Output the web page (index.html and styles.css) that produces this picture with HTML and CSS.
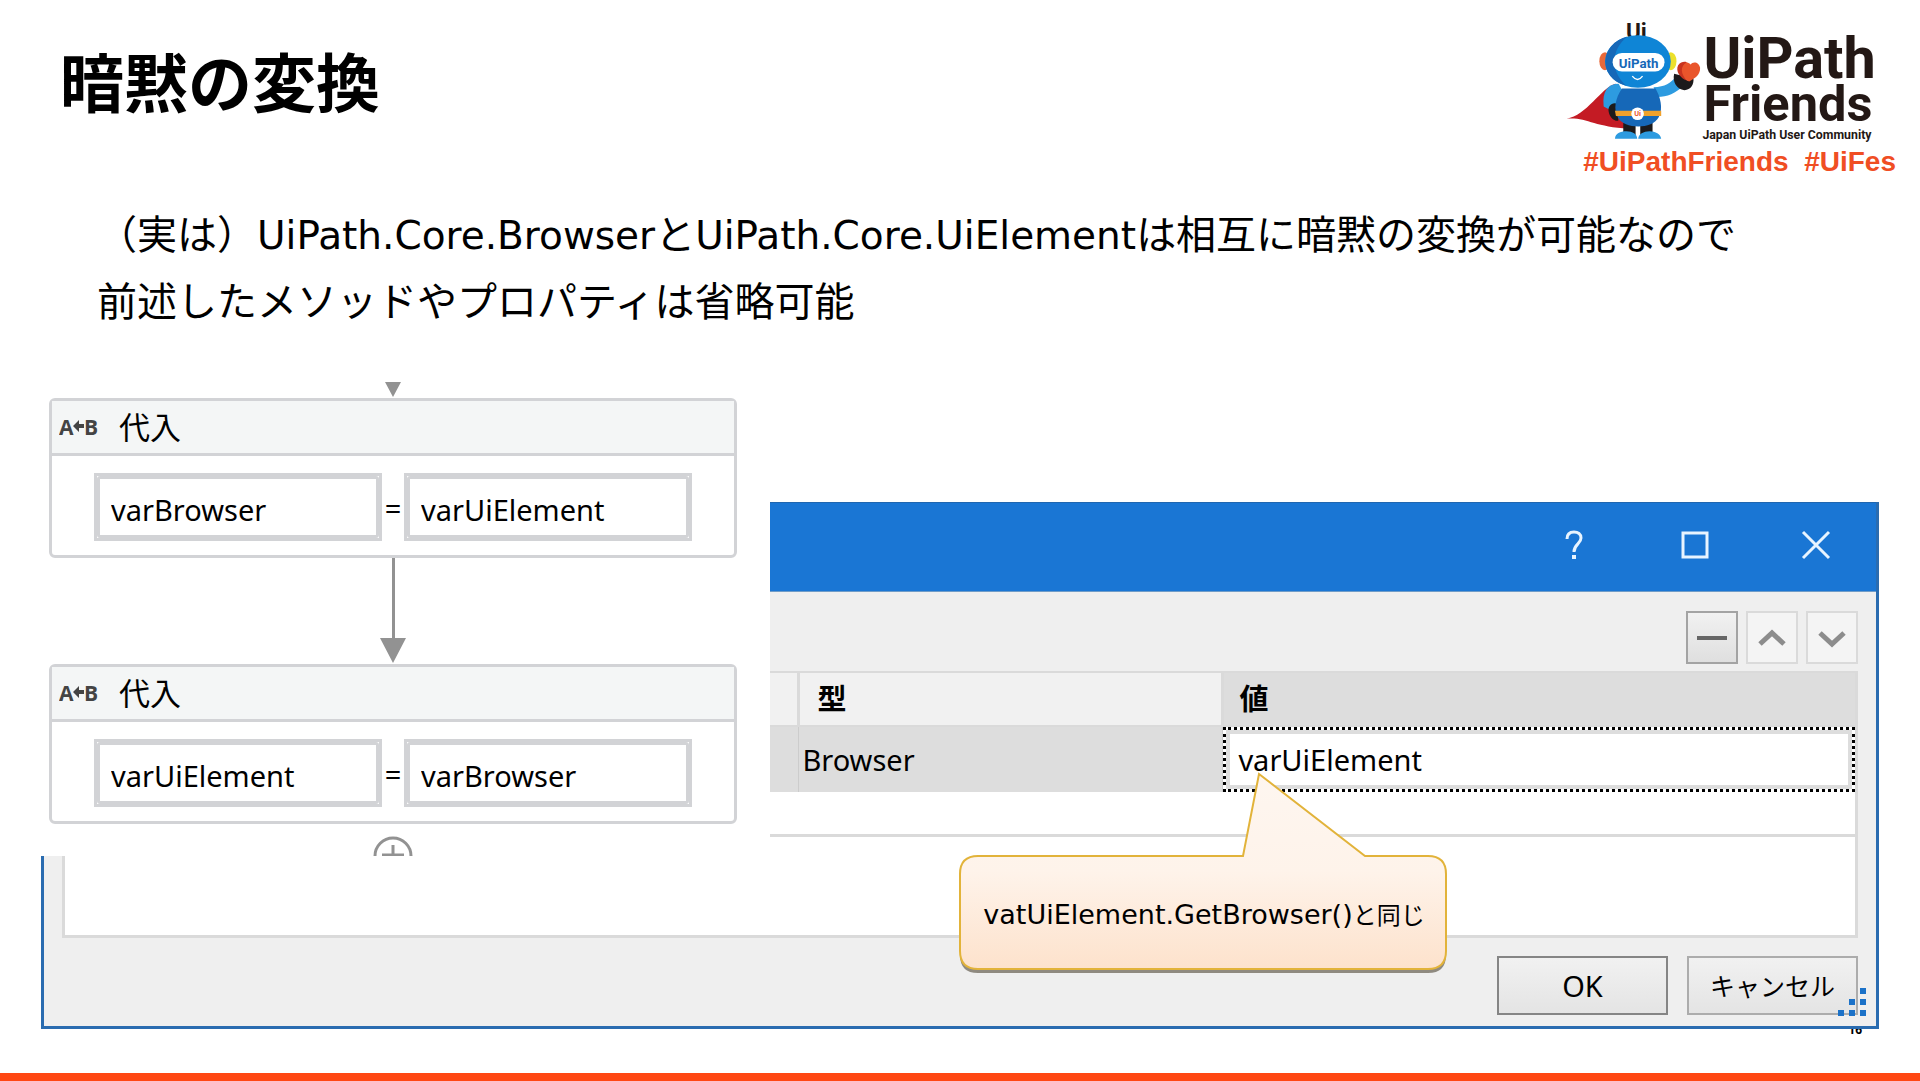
FILE: index.html
```html
<!DOCTYPE html>
<html lang="ja">
<head>
  <meta charset="UTF-8">
  <title>暗黙の変換</title>
  <link rel="stylesheet" href="styles.css">
</head>
<body>
  <header class="slide-header">
    <h1 class="slide-title">暗黙の変換</h1>
    <div class="brand">
      <svg class="brand-logo" viewBox="0 0 1110 400" role="img" aria-label="UiPath Friends">
        <!-- cape -->
        <path d="M196 222C150 235 110 318 48 327C110 322 130 352 236 357L215 240Z" fill="#c41b24"/>
        <!-- ears -->
        <ellipse cx="164" cy="154" rx="17" ry="27" fill="#e8693a"/>
        <ellipse cx="362" cy="154" rx="17" ry="27" fill="#ece02b"/>
        <!-- antenna -->
        <text class="logo-dark" x="227" y="88" font-size="68">Ui</text>
        <!-- raised arm -->
        <path d="M310 232C345 232 362 218 376 203L400 228C378 250 350 262 322 262Z" fill="#2d9be0"/>
        <path d="M372 192C366 215 380 240 403 241C422 240 432 224 430 205L412 212L390 196Z" fill="#1c1a1b"/>
        <path d="M417 215C398 205 385 184 394 166C402 153 415 156 421 164C430 152 448 158 450 174C451 195 436 205 417 215Z" fill="#e9552b"/>
        <path d="M412 213C390 205 375 184 384 166C392 156 402 154 410 157C390 168 390 192 412 213Z" fill="#c9341f"/>
        <!-- legs -->
        <path d="M219 340H256V380H219ZM270 340H307V380H270Z" fill="#1c1a1b"/>
        <path d="M194 387C195 372 210 365 228 365C248 365 260 374 261 387ZM264 387C265 374 280 365 298 365C316 365 331 374 333 387Z" fill="#2d9be0"/>
        <!-- body -->
        <path d="M205 222C172 222 155 245 160 290L188 305L215 240Z" fill="#2d9be0"/>
        <path d="M203 283C185 275 172 290 175 305C177 320 190 335 204 333Z" fill="#1c1a1b"/>
        <path d="M215 236C195 265 188 300 204 325C220 357 305 362 326 322C340 295 330 260 316 236Z" fill="#1668b8"/>
        <path d="M194 303H333V319H197Z" fill="#f0a12c"/>
        <circle cx="262" cy="312" r="19" fill="#fff"/>
        <text class="logo-red" x="262" y="320" font-size="22" text-anchor="middle">Ui</text>
        <!-- head -->
        <ellipse cx="263" cy="155" rx="99" ry="79" fill="#0f85d6"/>
        <path d="M232 80C148 100 140 205 228 228C180 185 180 120 232 80Z" fill="#1668b8"/>
        <rect x="187" y="129" width="156" height="56" rx="28" fill="#fff"/>
        <text class="logo-blue" x="265" y="173" font-size="40" text-anchor="middle">UiPath</text>
        <path d="M246 199Q262 219 277 199" fill="none" stroke="#fff" stroke-width="4"/>
        <text class="logo-dark" x="460" y="204" font-size="173">UiPath</text>
        <text class="logo-dark" x="460" y="335" font-size="152">Friends</text>
        <text class="logo-dark" x="457" y="388" font-size="37">Japan UiPath User Community</text>
      </svg>
      <p class="hashtags">#UiPathFriends&nbsp; #UiFes</p>
    </div>
  </header>

  <p class="lead">（実は）<span class="latin">UiPath.Core.Browser</span>と<span class="latin">UiPath.Core.UiElement</span>は相互に暗黙の変換が可能なので<br>前述したメソッドやプロパティは省略可能</p>

  <main class="stage">
    <span class="page-number">16</span>

    <section class="dialog">
      <div class="title-bar">
        <button class="window-button" aria-label="Help">
          <svg width="30" height="30" viewBox="0 0 30 30"><path d="M8 9C8 4 11 2 15 2C19 2 22 4 22 8C22 14 15 14 15 22" /><path d="M13 27H17" stroke-width="4"/></svg>
        </button>
        <button class="window-button" aria-label="Maximize">
          <svg width="30" height="30" viewBox="0 0 30 30"><path d="M3 3H27V27H3Z"/></svg>
        </button>
        <button class="window-button" aria-label="Close">
          <svg width="30" height="30" viewBox="0 0 30 30"><path d="M2 2L28 28M28 2L2 28"/></svg>
        </button>
      </div>
      <div class="toolbar">
        <button class="tool-button active" aria-label="Remove">
          <svg width="32" height="32" viewBox="0 0 32 32"><path d="M1 16H31"/></svg>
        </button>
        <button class="tool-button" aria-label="Up">
          <svg width="32" height="32" viewBox="0 0 32 32"><path d="M4 22L16 11L28 22" stroke-width="5"/></svg>
        </button>
        <button class="tool-button" aria-label="Down">
          <svg width="32" height="32" viewBox="0 0 32 32"><path d="M4 11L16 22L28 11" stroke-width="5"/></svg>
        </button>
      </div>
      <div class="grid-panel">
        <table class="arguments">
          <colgroup>
            <col class="col-name">
            <col class="col-type">
            <col>
          </colgroup>
          <thead>
            <tr><th></th><th>型</th><th class="selected">値</th></tr>
          </thead>
          <tbody>
            <tr>
              <td></td>
              <td>Browser</td>
              <td class="value-cell"><input type="text" class="value-input" aria-label="値" value="varUiElement"></td>
            </tr>
          </tbody>
        </table>
        <div class="grid-rest"></div>
      </div>
      <div class="dialog-footer">
        <button class="dialog-button ok">OK</button>
        <button class="dialog-button cancel">キャンセル</button>
      </div>
      <svg class="grip" width="28" height="28" viewBox="0 0 28 28"><path d="M22 0h6v6h-6zM11 11h6v6h-6zM22 11h6v6h-6zM0 22h6v6H0zM11 22h6v6h-6zM22 22h6v6h-6z" fill="#1c72c8"/></svg>
    </section>

    <section class="workflow">
      <svg class="flow-start" width="16" height="16" viewBox="0 0 16 16"><path d="M0 0H16L8 15Z" fill="#929292"/></svg>
      <div class="activity">
        <div class="activity-header">
          <svg class="assign-icon" width="40" height="32" viewBox="0 0 40 32"><text x="0" y="24">A</text><text x="25" y="24">B</text><path d="M14 15L20 9V13H25V17H20V21Z"/></svg>
          <span>代入</span>
        </div>
        <div class="activity-body">
          <span class="field"><input type="text" aria-label="To" value="varBrowser"></span>
          <span class="equals">=</span>
          <span class="field"><input type="text" aria-label="Value" value="varUiElement"></span>
        </div>
      </div>
      <svg class="flow-arrow" width="26" height="106" viewBox="0 0 26 106"><path d="M12 0H15V80H26L13 105L0 80H12Z" fill="#929292"/></svg>
      <div class="activity">
        <div class="activity-header">
          <svg class="assign-icon" width="40" height="32" viewBox="0 0 40 32"><text x="0" y="24">A</text><text x="25" y="24">B</text><path d="M14 15L20 9V13H25V17H20V21Z"/></svg>
          <span>代入</span>
        </div>
        <div class="activity-body">
          <span class="field"><input type="text" aria-label="To" value="varUiElement"></span>
          <span class="equals">=</span>
          <span class="field"><input type="text" aria-label="Value" value="varBrowser"></span>
        </div>
      </div>
      <svg class="flow-add" width="40" height="40" viewBox="0 0 40 40"><path d="M9 19H31M20 9V29" /><circle cx="20" cy="20" r="18"/></svg>
    </section>

    <aside class="callout">
      <svg class="callout-shape" width="492" height="204" viewBox="0 0 492 204">
        <defs>
          <linearGradient id="calloutFill" x1="0" y1="0" x2="0" y2="1">
            <stop offset="0" stop-color="#fef6f0"/>
            <stop offset="0.5" stop-color="#fef3ea"/>
            <stop offset="1" stop-color="#fde2cc"/>
          </linearGradient>
        </defs>
        <path d="M20 89H470Q488 89 488 107V185Q488 203 470 203H20Q2 203 2 185V107Q2 89 20 89Z" fill="#8f8a80"/>
        <path d="M20 86H285L301 4L407 86H470Q488 86 488 104V181Q488 199 470 199H20Q2 199 2 181V104Q2 86 20 86Z" fill="url(#calloutFill)" stroke="#e2b33a" stroke-width="2"/>
      </svg>
      <p class="callout-text"><span class="callout-code">vatUiElement.GetBrowser()</span>と同じ</p>
    </aside>
  </main>
  <footer class="slide-footer"></footer>
</body>
</html>
```
FILE: styles.css
```css
* {
  box-sizing: border-box;
}

body {
  margin: 0;
  min-height: 100vh;
  display: flex;
  flex-direction: column;
  background: #fff;
  color: #000;
  font-family: "Noto Sans", "Noto Sans CJK JP", sans-serif;
  font-size: 29px;
}

svg {
  display: block;
}

button,
input {
  font: inherit;
  color: inherit;
}

.slide-header {
  display: flex;
  justify-content: space-between;
  padding: 10px 0 0 60px;
}

.slide-title {
  margin: 21px 0 0;
  font-family: "Noto Sans CJK JP", sans-serif;
  font-size: 64px;
  line-height: 96px;
  font-weight: bold;
}

.brand-logo {
  width: 370px;
  height: 133px;
}

.brand-logo text {
  font-family: Roboto, sans-serif;
  font-weight: bold;
}

.logo-dark {
  fill: #231815;
}

.logo-blue {
  fill: #1668b8;
}

.logo-red {
  fill: #e9552b;
}

.hashtags {
  margin: 0;
  padding-right: 24px;
  text-align: right;
  font-family: "Liberation Sans", Arial, sans-serif;
  font-size: 28px;
  line-height: 38px;
  font-weight: bold;
  color: #f04e23;
}

.lead {
  margin: 18px 60px 0 97px;
  font-family: "Noto Sans CJK JP", sans-serif;
  font-size: 40px;
  line-height: 67px;
}

.latin {
  font-family: "DejaVu Sans", Verdana, sans-serif;
  font-size: 39px;
  line-height: 40px;
}

.stage {
  position: relative;
  flex: 1;
  margin-top: 2px;
  padding: 167px 41px 0;
}

/* dialog window */
.dialog {
  position: relative;
  border: 3px solid #2a6cb0;
  border-top: 0;
  background: #efefef;
}

.title-bar {
  display: flex;
  justify-content: flex-end;
  height: 90px;
  padding-bottom: 4px;
  background: #1a76d4;
  border-top: 1px solid #1f66b0;
  border-bottom: 1px solid #6f9cc8;
}

.window-button {
  display: flex;
  align-items: center;
  justify-content: center;
  width: 121px;
  padding: 0;
  border: none;
  background: none;
}

.window-button svg {
  fill: none;
  stroke: #e8f4ff;
  stroke-width: 3;
}

.toolbar {
  display: flex;
  justify-content: flex-end;
  gap: 8px;
  padding: 19px 18px 7px;
}

.tool-button {
  display: flex;
  align-items: center;
  justify-content: center;
  width: 52px;
  height: 53px;
  padding: 0;
  border: 2px solid #dadada;
  background: #f4f4f4;
}

.tool-button svg {
  fill: none;
  stroke: #8c8c8c;
  stroke-width: 4;
}

.tool-button.active {
  border-color: #a3a3a3;
  background: linear-gradient(#f1f1f1, #dfdfdf);
}

.tool-button.active svg {
  stroke: #666;
}

.grid-panel {
  margin: 0 18px;
  border: 3px solid #dadada;
  border-top-width: 2px;
  background: #fff;
}

.arguments {
  width: 100%;
  table-layout: fixed;
  border-collapse: collapse;
}

.col-name {
  width: 41%;
}

.col-type {
  width: 424px;
}

.arguments th {
  height: 53px;
  padding: 0 0 0 17px;
  border-right: 3px solid #dadada;
  border-bottom: 2px solid #dadada;
  background: #f1f1f1;
  text-align: left;
  line-height: 40px;
}

.arguments .selected {
  padding-left: 15px;
  border-right: 0;
  background: #ddd;
}

.arguments td {
  height: 65px;
  padding: 0 0 0 3px;
  border-right: 1px solid #ccc;
  background: #ddd;
  line-height: 40px;
}

.arguments .value-cell {
  padding: 0;
  border-right: 0;
}

.value-input {
  display: block;
  width: 100%;
  height: 65px;
  padding: 0 12px;
  border: 3px dotted #000;
  background: #fff;
  box-shadow: inset 0 0 0 4px #ddd;
}

.grid-rest {
  height: 143px;
  background: linear-gradient(#dadada, #dadada) 0 42px / 100% 3px no-repeat;
}

.dialog-footer {
  display: flex;
  justify-content: flex-end;
  gap: 19px;
  padding: 18px 18px 11px;
}

.dialog-button {
  width: 171px;
  height: 59px;
  padding: 0;
  border: 2px solid #acacac;
  background: linear-gradient(#f1f1f1, #e4e4e4);
  line-height: 40px;
}

.dialog-button.ok {
  border-color: #858585;
}

.dialog-button.cancel {
  font-size: 25px;
}

.grip {
  position: absolute;
  right: 10px;
  bottom: 10px;
}

.page-number {
  position: absolute;
  right: 58px;
  bottom: 35px;
  font-size: 12px;
  line-height: 16px;
  font-weight: bold;
}

/* workflow capture laid over the dialog */
.workflow {
  position: absolute;
  left: 0;
  top: 47px;
  display: flex;
  flex-direction: column;
  align-items: center;
  width: 770px;
  height: 474px;
  padding: 0 33px 0 49px;
  overflow: hidden;
  background: #fff;
}

.activity {
  width: 100%;
  border: 3px solid #d2d3d6;
  border-radius: 6px;
  background: #fff;
}

.activity-header {
  display: flex;
  align-items: center;
  gap: 20px;
  height: 55px;
  padding-left: 7px;
  border-bottom: 3px solid #d2d3d6;
  background: #f4f6f6;
  font-size: 31px;
  line-height: 40px;
}

.assign-icon {
  fill: #444;
}

.assign-icon text {
  font-family: "Open Sans", sans-serif;
  font-size: 21px;
  font-weight: bold;
}

.activity-body {
  display: flex;
  align-items: center;
  padding: 17px 42px 14px;
}

.field {
  flex: 1;
  padding: 0;
  border: 3px solid #d2d3d6;
  background: #fff;
}

.field input {
  display: block;
  width: 100%;
  height: 62px;
  padding: 4px 11px 0;
  border: 3px solid #d2d3d6;
  border-radius: 3px;
  background: #fff;
}

.equals {
  width: 22px;
  text-align: center;
}

.flow-start {
  flex: none;
}

.flow-arrow,
.flow-add {
  flex: none;
}

.flow-add {
  margin-top: 12px;
  fill: none;
  stroke: #929292;
  stroke-width: 3;
}

/* callout */
.callout {
  position: absolute;
  left: 958px;
  top: 435px;
  width: 492px;
  height: 204px;
}

.callout-text {
  position: relative;
  margin: 0;
  padding-top: 124px;
  text-align: center;
  font-family: "Noto Sans CJK JP", sans-serif;
  font-size: 24px;
  line-height: 40px;
}

.callout-code {
  font-family: "DejaVu Sans", Verdana, sans-serif;
  font-size: 27px;
}

.callout-shape {
  position: absolute;
  left: 0;
  top: 0;
}

.slide-footer {
  height: 8px;
  background: #ff4713;
}
```
